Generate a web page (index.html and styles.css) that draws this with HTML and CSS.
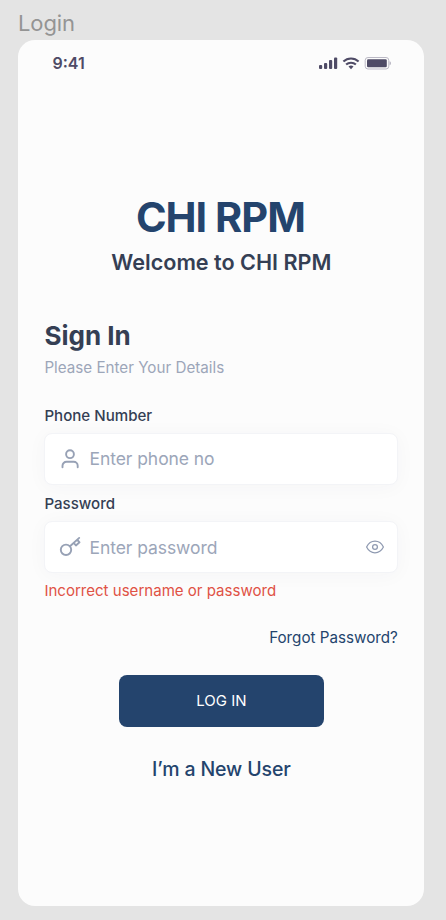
FILE: index.html
```html
<!DOCTYPE html>
<html lang="en">
<head>
<meta charset="utf-8">
<title>Login</title>
<link rel="stylesheet" href="styles.css">
</head>
<body>
<div class="frame-label">Login</div>
<main class="phone">
  <header class="status">
    <span class="time">9:41</span>
    <svg class="status-icons" width="74" height="14" viewBox="0 0 74 14" fill="#4f4b66">
      <rect x="1" y="9" width="3.200" height="4" rx="1"/>
      <rect x="6" y="7" width="3.200" height="6" rx="1"/>
      <rect x="11" y="4" width="3.200" height="9" rx="1"/>
      <rect x="16" y="1.500" width="3.200" height="11.500" rx="1"/>
      <g fill="none" stroke="#4f4b66" stroke-width="2.100">
        <path d="M25.400 5.500a11 11 0 0 1 15.200 0"/>
        <path d="M28.100 8.600a7.200 7.200 0 0 1 9.800 0"/>
      </g>
      <path d="M30.500 10.500a3.800 3.800 0 0 1 5 0L33 13.200z"/>
      <rect x="47.200" y="1.500" width="23.600" height="11.500" rx="2.800" fill="none" stroke="#bbb9c5"/>
      <rect x="49" y="3.300" width="19.800" height="8" rx="1.300"/>
      <path d="M71.500 5.300v4c1-.3 1.500-1 1.500-2s-.5-1.700-1.500-2z" fill="#bbb9c5"/>
    </svg>
  </header>
  <h1 class="logo">CHI RPM</h1>
  <p class="welcome">Welcome to CHI RPM</p>
  <form class="form">
    <h2 class="title">Sign In</h2>
    <p class="subtitle">Please Enter Your Details</p>
    <div class="label">Phone Number</div>
    <div class="field">
      <svg class="icon" width="24" height="24" viewBox="0 0 24 24" fill="none" stroke="#97a1b5" stroke-width="1.900" stroke-linecap="round">
        <circle cx="12" cy="7.200" r="3.900"/>
        <path d="M4.500 20.300v-1.500a4 4 0 0 1 4-4h7.200a4 4 0 0 1 4 4v1.500"/>
      </svg>
      <span class="placeholder">Enter phone no</span>
    </div>
    <div class="label second">Password</div>
    <div class="field">
      <svg class="icon" width="24" height="24" viewBox="0 0 24 24" fill="none" stroke="#97a1b5" stroke-width="1.900" stroke-linecap="round" stroke-linejoin="round">
        <circle cx="8" cy="14.800" r="5.200"/>
        <path d="M12 11.200L21.200 2.900M15.700 7.900l2.200 2.600 3.600-3.200-2.100-2.500"/>
      </svg>
      <span class="placeholder">Enter password</span>
      <svg class="eye" width="20" height="16" viewBox="0 0 20 16" fill="none" stroke="#8f9ab1" stroke-width="1.250" stroke-linejoin="round">
        <path d="M1.600 8C3.500 4.200 6.500 2.200 10 2.200S16.500 4.200 18.400 8C16.500 11.800 13.500 13.800 10 13.800S3.500 11.800 1.600 8z"/>
        <circle cx="10" cy="8" r="2.400"/>
      </svg>
    </div>
    <p class="error">Incorrect username or password</p>
    <a class="forgot">Forgot Password?</a>
    <button class="login" type="button">LOG IN</button>
    <a class="new-user">I’m a New User</a>
  </form>
</main>
</body>
</html>
```
FILE: styles.css
```css
* { box-sizing: border-box; }
body {
  margin: 0;
  height: 920px;
  overflow: hidden;
  background: #e4e4e4;
  font-family: Inter, "Liberation Sans", sans-serif;
  color: #353f54;
}
h1, h2, p { margin: 0; }
.frame-label {
  height: 39.5px;
  padding: 9px 0 0 18px;
  font-size: 22px;
  line-height: 28px;
  letter-spacing: -.1px;
  color: #949494;
}
.phone {
  width: 406px;
  height: 866.5px;
  margin-left: 18.4px;
  padding: 0 26px;
  border-radius: 17px;
  background: #fcfcfc;
  display: flex;
  flex-direction: column;
}
.status {
  height: 46px;
  margin: 0 6px 0 8px;
  display: flex;
  align-items: center;
  justify-content: space-between;
  color: #4f4b66;
}
.time { font-size: 16px; font-weight: 600; }
.logo {
  margin-top: 106.5px;
  padding-right: 2px;
  text-align: center;
  font-size: 41.5px;
  line-height: 50px;
  font-weight: 700;
  letter-spacing: -1px;
  color: #24446d;
}
.welcome {
  margin-top: 3.5px;
  text-align: center;
  font-size: 21.6px;
  line-height: 32px;
  font-weight: 600;
}
.form { display: flex; flex-direction: column; }
.title {
  margin-top: 42px;
  font-size: 26px;
  line-height: 32px;
  font-weight: 700;
}
.subtitle {
  margin-top: 6px;
  font-size: 15.2px;
  line-height: 20px;
  color: #9ca6b9;
}
.label {
  margin-top: 28px;
  font-size: 15.1px;
  line-height: 20px;
  font-weight: 500;
}
.second { margin-top: 9.5px; }
.field {
  height: 52px;
  width: 354px;
  margin-top: 7px;
  padding: 0 12px 0 13px;
  display: flex;
  align-items: center;
  border: 1px solid #f3f4f7;
  border-radius: 8px;
  background: #fff;
  box-shadow: 0 2px 20px rgba(60, 70, 90, .035);
}
.placeholder {
  margin-left: 7.2px;
  font-size: 17.5px;
  letter-spacing: -.08px;
  color: #9ca6b9;
}
.eye { margin-left: auto; }
.error {
  margin-top: 8px;
  font-size: 15.05px;
  line-height: 20px;
  color: #e05245;
}
.forgot {
  margin-top: 27px;
  align-self: flex-end;
  margin-right: .6px;
  font-size: 15.2px;
  line-height: 20px;
  color: #24446d;
}
.login {
  width: 205px;
  height: 52px;
  margin-top: 26.5px;
  padding: 1px 0 0;
  align-self: center;
  border: 0;
  border-radius: 8px;
  background: #24446d;
  color: #fff;
  font: 400 15px/20px Inter, sans-serif;
}
.new-user {
  margin-top: 28px;
  align-self: center;
  font-size: 19.5px;
  line-height: 28px;
  font-weight: 500;
  letter-spacing: -.12px;
  color: #24446d;
}
```
